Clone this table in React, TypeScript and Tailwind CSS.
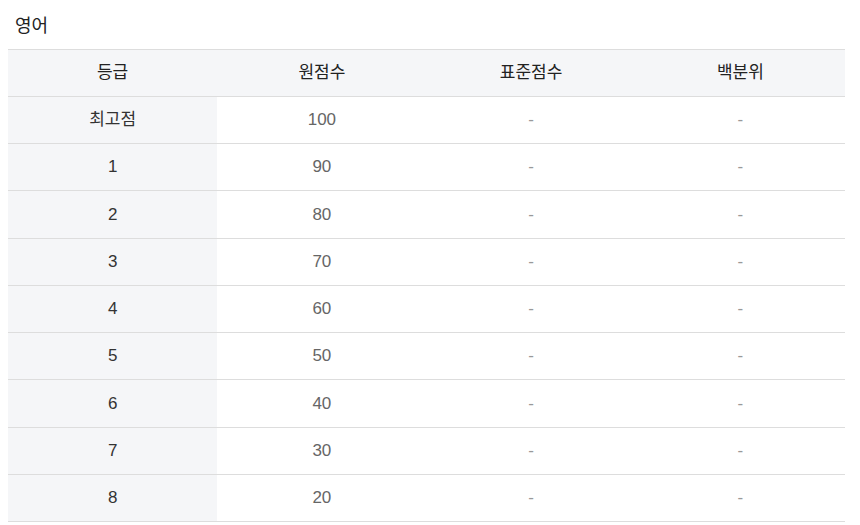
import React from "react";

// [등급, 원점수, 행 높이]
const ROWS: [string, string, string][] = [
  ["최고점", "100", "h-[47px]"],
  ["1", "90", "h-[47px]"],
  ["2", "80", "h-[48px]"],
  ["3", "70", "h-[47px]"],
  ["4", "60", "h-[47px]"],
  ["5", "50", "h-[47px]"],
  ["6", "40", "h-[48px]"],
  ["7", "30", "h-[47px]"],
  ["8", "20", "h-[47px]"],
];

const HEAD = ["등급", "원점수", "표준점수", "백분위"];

export default function App() {
  return (
    <div
      className="bg-white w-[860px] h-[525px] overflow-hidden"
      style={{ fontFamily: '"Liberation Sans", "Noto Sans CJK KR", sans-serif' }}
    >
      <div className="pl-[15px] pt-[13px] h-[49px] text-[18px] leading-[26px] text-[#222]">영어</div>
      <table className="ml-[8px] w-[837px] border-collapse table-fixed text-[17px]">
        <thead>
          <tr className="h-[47px] bg-[#f5f6f8] border-y border-[#dddddd]">
            {HEAD.map((h) => (
              <th key={h} className="font-normal text-[#222] text-center">{h}</th>
            ))}
          </tr>
        </thead>
        <tbody>
          {ROWS.map(([grade, raw, h]) => (
            <tr key={grade} className={`${h} border-b border-[#dddddd]`}>
              <td className="bg-[#f5f6f8] text-center text-[#333]">{grade}</td>
              <td className="text-center text-[#666]">{raw}</td>
              <td className="text-center text-[#999]">-</td>
              <td className="text-center text-[#999]">-</td>
            </tr>
          ))}
        </tbody>
      </table>
    </div>
  );
}
